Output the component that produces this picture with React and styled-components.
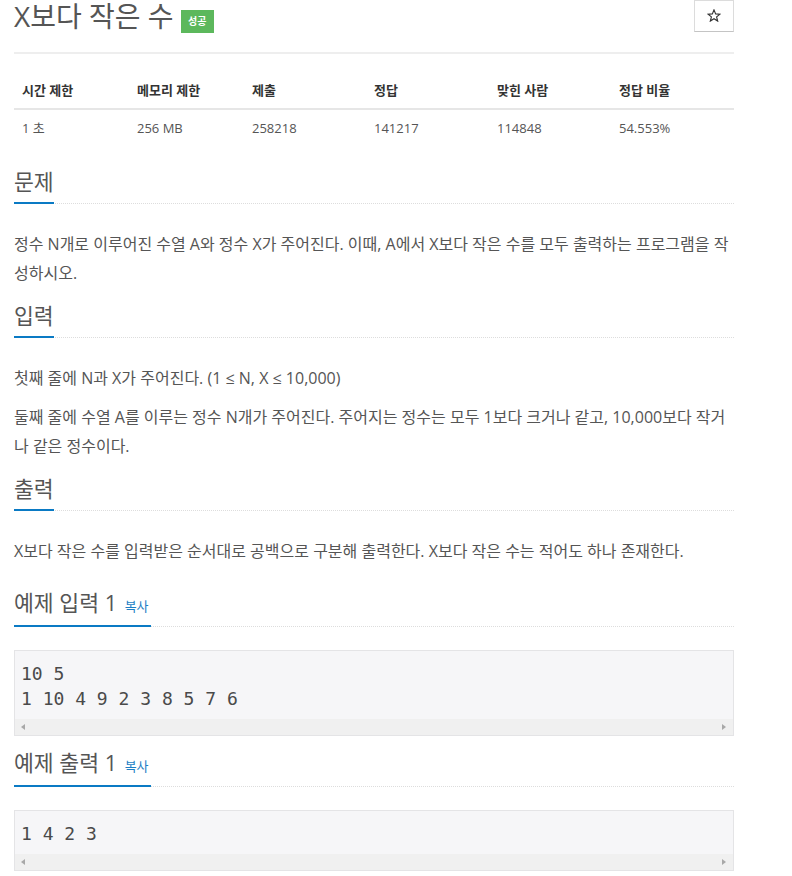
import React from "react";
import styled, { createGlobalStyle } from "styled-components";

const GlobalStyle = createGlobalStyle`
  html, body { margin: 0; padding: 0; background: #fff; }
  body {
    font-family: "Open Sans", "Noto Sans CJK KR", sans-serif;
    color: #555;
  }
`;

const Page = styled.div`
  width: 720px;
  padding: 0 0 0 14px;
  display: flex;
  flex-direction: column;
`;

const TitleRow = styled.div`
  display: flex;
  align-items: flex-start;
  height: 32px;
`;

const Title = styled.h1`
  margin: 0;
  font-size: 28px;
  font-weight: 400;
  line-height: 32px;
  color: #555;
`;

const Badge = styled.span`
  margin: 10px 0 0 7px;
  height: 23px;
  padding: 0 7.5px;
  background: #5cb85c;
  color: #fff;
  font-size: 10px;
  font-weight: 700;
  line-height: 23px;
`;

const StarButton = styled.button`
  margin-left: auto;
  width: 40px;
  height: 32px;
  box-sizing: border-box;
  border: 1px solid #dcdcdc;
  border-bottom-color: #c4c4c4;
  background: #fff;
  display: flex;
  align-items: center;
  justify-content: center;
  padding: 0 0 2px;
`;

const Divider = styled.div`
  height: 2px;
  background: #eee;
  margin: 20px 0 18px;
`;

const InfoTable = styled.table`
  width: 100%;
  border-collapse: collapse;
  table-layout: fixed;
  font-size: 13px;
`;

const Th = styled.th`
  box-sizing: border-box;
  width: ${(p) => p.$w}px;
  text-align: left;
  padding: 8px;
  line-height: 20px;
  font-weight: 700;
  color: #333;
  border-bottom: 2px solid #e6e6e6;
`;

const Td = styled.td`
  padding: 8px;
  line-height: 20px;
  color: #555;
`;

const Section = styled.section`
  margin-top: ${(p) => p.$top}px;
  display: flow-root;
`;

const Headline = styled.div`
  display: flex;
  border-bottom: 1px dotted #ddd;
`;

const H2 = styled.h2`
  margin: 0 0 -1px;
  font-size: 21.6px;
  font-weight: 400;
  line-height: 24px;
  padding-bottom: ${(p) => p.$pad}px;
  border-bottom: 2px solid #0a7ac4;
  color: #555;
`;

const CopyButton = styled.span`
  font-size: 13px;
  line-height: 1;
  color: #1f7fc4;
  padding: 0 2px;
`;

const Body = styled.div`
  margin-top: 26px;
`;

const P = styled.p`
  margin: 0 0 10px;
  font-size: 16px;
  line-height: 29px;
  color: #555;
`;

const SampleBox = styled.div`
  margin-top: 23px;
  border: 1px solid #e4e4e6;
  background: #f6f6f8;
`;

const Code = styled.pre`
  margin: 0;
  padding: 10px 6px 8px;
  font-family: "DejaVu Sans Mono", monospace;
  font-size: 18px;
  line-height: 25px;
  color: #4a4a4a;
  white-space: pre;
`;

const ScrollTrack = styled.div`
  height: 16px;
  background: #f0f0f0;
  display: flex;
  align-items: center;
  justify-content: space-between;
  padding: 0 7px 0 6px;
`;

const Arrow = styled.span`
  width: 0;
  height: 0;
  border-top: 3.5px solid transparent;
  border-bottom: 3.5px solid transparent;
  ${(p) =>
    p.$dir === "left"
      ? "border-right: 4px solid #a8a8a8;"
      : "border-left: 4px solid #a8a8a8;"}
`;

const StarIcon = () => (
  <svg width="14" height="13" viewBox="0 0 24 23" aria-hidden="true">
    <polygon
      points="12,1.5 14.9,8.6 22.5,9.1 16.6,14 18.5,21.4 12,17.3 5.5,21.4 7.4,14 1.5,9.1 9.1,8.6"
      fill="none"
      stroke="#333"
      strokeWidth="2"
      strokeLinejoin="miter"
    />
  </svg>
);

const columns = [
  ["시간 제한", "1 초", 115],
  ["메모리 제한", "256 MB", 115],
  ["제출", "258218", 122],
  ["정답", "141217", 123],
  ["맞힌 사람", "114848", 122],
  ["정답 비율", "54.553%", 123],
];

const Sample = ({ title, top, code }) => (
  <Section $top={top}>
    <Headline>
      <H2 $pad={10}>
        {title} <CopyButton>복사</CopyButton>
      </H2>
    </Headline>
    <SampleBox>
      <Code>{code}</Code>
      <ScrollTrack>
        <Arrow $dir="left" />
        <Arrow $dir="right" />
      </ScrollTrack>
    </SampleBox>
  </Section>
);

export default function App() {
  return (
    <>
      <GlobalStyle />
      <Page>
        <TitleRow>
          <Title>X보다 작은 수</Title>
          <Badge>성공</Badge>
          <StarButton aria-label="즐겨찾기">
            <StarIcon />
          </StarButton>
        </TitleRow>
        <Divider />
        <InfoTable>
          <thead>
            <tr>
              {columns.map(([h, , w]) => (
                <Th key={h} $w={w}>
                  {h}
                </Th>
              ))}
            </tr>
          </thead>
          <tbody>
            <tr>
              {columns.map(([h, v]) => (
                <Td key={h}>{v}</Td>
              ))}
            </tr>
          </tbody>
        </InfoTable>

        <Section $top={24}>
          <Headline>
            <H2 $pad={8}>문제</H2>
          </Headline>
          <Body>
            <P>
              정수 N개로 이루어진 수열 A와 정수 X가 주어진다. 이때, A에서 X보다 작은 수를 모두 출력하는 프로그램을 작성하시오.
            </P>
          </Body>
        </Section>

        <Section $top={6}>
          <Headline>
            <H2 $pad={8}>입력</H2>
          </Headline>
          <Body>
            <P>첫째 줄에 N과 X가 주어진다. (1 ≤ N, X ≤ 10,000)</P>
            <P>
              둘째 줄에 수열 A를 이루는 정수 N개가 주어진다. 주어지는 정수는 모두 1보다 크거나 같고, 10,000보다 작거나 같은 정수이다.
            </P>
          </Body>
        </Section>

        <Section $top={6}>
          <Headline>
            <H2 $pad={8}>출력</H2>
          </Headline>
          <Body>
            <P>X보다 작은 수를 입력받은 순서대로 공백으로 구분해 출력한다. X보다 작은 수는 적어도 하나 존재한다.</P>
          </Body>
        </Section>

        <Sample title="예제 입력 1" top={15} code={"10 5\n1 10 4 9 2 3 8 5 7 6"} />
        <Sample title="예제 출력 1" top={15} code={"1 4 2 3"} />
      </Page>
    </>
  );
}
